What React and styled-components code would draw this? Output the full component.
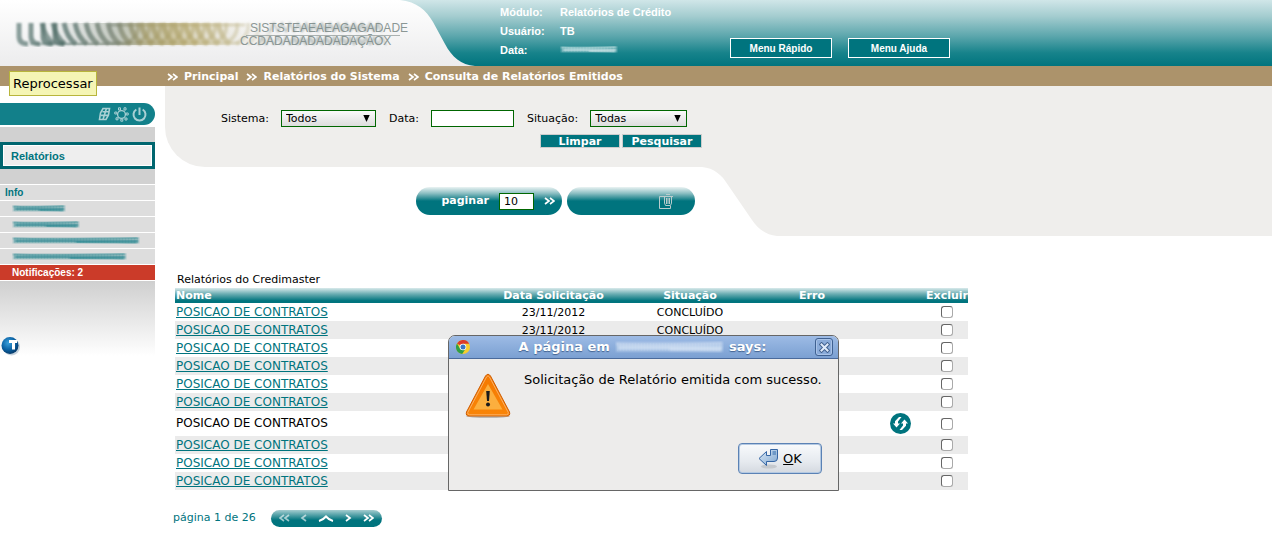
import React, { useState } from "react"
import styled, { createGlobalStyle, css } from "styled-components"

const GlobalStyle = createGlobalStyle`
	* {
		box-sizing: border-box;
	}

	body {
		margin: 0;
		background: #fff;
		color: #000;
		font: 11px/18px "DejaVu Sans", Verdana, sans-serif;
	}

	button, input, select {
		font: inherit;
		margin: 0;
		padding: 0;
		border-radius: 0;
	}

	svg {
		display: block;
		flex: none;
	}
`

const crumbs = ["Principal", "Relatórios do Sistema", "Consulta de Relatórios Emitidos"]

const reports = [
	{ id: 1, date: "23/11/2012", status: "CONCLUÍDO" },
	{ id: 2, date: "23/11/2012", status: "CONCLUÍDO" },
	{ id: 3 },
	{ id: 4 },
	{ id: 5 },
	{ id: 6 },
	{ id: 7, failed: true },
	{ id: 8 },
	{ id: 9 },
	{ id: 10 },
]

const infoItems = [54, 68, 128, 115]

const Chevrons = ({ left, single, faded }) => (
	<svg width={single ? 7 : 11} height="8" viewBox={single ? "0 0 7 8" : "0 0 11 8"}
		fill="none" stroke="#fff" strokeWidth="1.7" opacity={faded ? 0.6 : 1}>
		<g transform={left ? `translate(${single ? 7 : 11} 0) scale(-1 1)` : undefined}>
			<path d="M1 1 L5 4 L1 7" />
			{!single && <path d="M6 1 L10 4 L6 7" />}
		</g>
	</svg>
)

const Smudge = ({ w, h = 9, color = "#26868f", id }) => (
	<svg width={w} height={h} viewBox={`0 0 ${w} 9`} preserveAspectRatio="none" aria-hidden="true">
		<defs>
			<filter id={id} x="-5%" y="-30%" width="110%" height="160%">
				<feGaussianBlur stdDeviation="1 0.6" />
			</filter>
		</defs>
		<g filter={`url(#${id})`} stroke={color} fill="none">
			<path d={`M1 4.5 H${w - 1}`} strokeWidth="6" opacity="0.35" />
			<path d={`M1 2.5 Q${w / 3} 4 ${w - 2} 2`} strokeWidth="2" opacity="0.4" />
			<path d={`M3 5 H${w - 2}`} strokeWidth="2.4" opacity="0.6" />
			<path d={`M${w / 2} 6 Q${w * 0.8} 6 ${w - 3} 6.5`} strokeWidth="2" opacity="0.5" />
		</g>
		<path d={`M2 4.5 H${w - 2}`} stroke={color} strokeWidth="5" strokeDasharray="1 2" opacity="0.1" />
	</svg>
)

const range = (n) => Array.from({ length: n }, (_, i) => i)

const Brand = () => (
	<svg width="475" height="66" viewBox="0 0 475 66" aria-hidden="true">
		<defs>
			<linearGradient id="plate" x1="0" y1="0" x2="0" y2="1">
				<stop offset="0" stopColor="#fff" />
				<stop offset="1" stopColor="#ececed" />
			</linearGradient>
			<linearGradient id="ink" gradientUnits="userSpaceOnUse" x1="16" y1="0" x2="275" y2="0">
				<stop offset="0" stopColor="#6f8884" />
				<stop offset="0.2" stopColor="#4c6963" />
				<stop offset="0.38" stopColor="#768070" />
				<stop offset="0.5" stopColor="#a39a68" />
				<stop offset="0.68" stopColor="#b7aa72" />
				<stop offset="0.85" stopColor="#c9c19c" />
				<stop offset="1" stopColor="#e2e1dc" />
			</linearGradient>
			<linearGradient id="band" gradientUnits="userSpaceOnUse" x1="40" y1="0" x2="260" y2="0">
				<stop offset="0" stopColor="#8fa09b" stopOpacity="0" />
				<stop offset="0.35" stopColor="#8f9a86" stopOpacity="0.5" />
				<stop offset="0.6" stopColor="#b7aa72" stopOpacity="0.65" />
				<stop offset="1" stopColor="#dcd8c6" stopOpacity="0" />
			</linearGradient>
			<filter id="soft"><feGaussianBlur stdDeviation="0.8" /></filter>
		</defs>
		<path fill="url(#plate)"
			d="M0 0 H400 C417 2 426 10 433 22 L445 44 C452 57 461 65 475 66 H0 Z" />
		<path fill="url(#band)" d="M40 23 H260 V45 H40 Z" />
		<g filter="url(#soft)" stroke="url(#ink)" fill="none">
			{range(4).map(i => (
				<path key={i} strokeWidth="5" opacity="0.8"
					d={`M${19 + i * 12} 23 V36 Q${19 + i * 12} 44 ${28 + i * 12} 44`} />
			))}
			{range(17).map(i => (
				<path key={i} strokeWidth="5" opacity="0.7"
					d={`M${42 + i * 11} 23 Q${45 + i * 11} 38 ${54 + i * 11} 44`} />
			))}
			{range(13).map(i => (
				<path key={i} strokeWidth="4" opacity="0.5"
					d={`M${126 + i * 11} 44 Q${140 + i * 11} 36 ${138 + i * 11} 23`} />
			))}
			<path d="M30 43.9 L130 44" strokeWidth="2" opacity="0.6" />
			<path d="M110 25 L245 24.9 M110 43 L240 42.9" strokeWidth="3" opacity="0.55" />
		</g>
		<g fill="#8b9795" fontFamily="Liberation Sans, Arial, sans-serif" fontSize="12" fontWeight="normal">
			<text x="250" y="32">SISTSTEAEAEAGAGADADE</text>
			<text x="240" y="45">CCDADADADADADAÇÃOX</text>
		</g>
		<g filter="url(#soft)" stroke="#7d8c89" fill="none" opacity="0.55">
			{range(14).map(i => (
				<path key={i} strokeWidth="1.5"
					d={`M${270 + i * 8} 32 L${274 + i * 8} 23 L${278 + i * 8} 32`} />
			))}
			{range(16).map(i => (
				<path key={i} strokeWidth="1.5"
					d={`M${258 + i * 8} 45 L${262 + i * 8} 37 L${266 + i * 8} 45`} />
			))}
			<path d="M300 27.5 H380 M290 41 H375" strokeWidth="5" opacity="0.4" />
		</g>
		<path d="M246 35.5 H400" stroke="#8c9795" opacity="0.7" />
	</svg>
)

const SheetIcon = () => (
	<svg width="13" height="14" viewBox="0 0 13 14" fill="none" stroke="#a9d0d4" strokeWidth="1.6">
		<path d="M5 1.5 H11.5 L10.5 8 L8 12.5 H1.5 L2.5 6 Z" />
		<path d="M4.4 4.8 H11 M3 8.4 H10.5 M8.4 1.5 L5 12.5" />
	</svg>
)

const GearIcon = () => (
	<svg width="15" height="15" viewBox="0 0 15 15" fill="none" stroke="#a9d0d4">
		<circle cx="7.5" cy="7.5" r="3.9" strokeWidth="1.3" />
		<path strokeWidth="1"
			d="M4.5 0.8 H6.5 V3 H4.5 Z M10 0.8 H12 V3 H10 Z M12.2 6 H14.2 V8 H12.2 Z M11 11 H13 V13 H11 Z M6.8 12.2 H8.8 V14.2 H6.8 Z M2 10.8 H4 V12.8 H2 Z M0.8 5 H2.8 V7 H0.8 Z" />
	</svg>
)

const PowerIcon = () => (
	<svg width="15" height="15" viewBox="0 0 15 15" fill="none" stroke="#a9d0d4" strokeWidth="2">
		<path d="M4.3 2.5 A6 6 0 1 0 10.7 2.5 M7.5 0.5 V8" />
	</svg>
)

const BallIcon = () => (
	<svg width="20" height="20" viewBox="0 0 20 20">
		<defs>
			<radialGradient id="ball" cx="0.4" cy="0.35" r="0.65">
				<stop offset="0" stopColor="#3aa0dc" />
				<stop offset="0.6" stopColor="#0c64a6" />
				<stop offset="1" stopColor="#053b6c" />
			</radialGradient>
		</defs>
		<circle cx="10.5" cy="11" r="8.5" fill="#9fb4c6" opacity="0.6" />
		<circle cx="9" cy="9.5" r="8.5" fill="url(#ball)" />
		<path d="M8 4 H16 V7 H14 V13.5 H11 V7 H8 Z" fill="#fff" />
	</svg>
)

const TrashIcon = () => (
	<svg width="14" height="16" viewBox="0 0 14 16" fill="none" stroke="#b9cccd">
		<path d="M4 3.5 H0.5 V15.5 H11.5 V13" />
		<path d="M4 3.5 H14 M7 1.5 H11 M5.5 4 V10 L6.5 12.5 H11.5 L12.5 10 V4 M7.5 5 V11 M9 5 V11 M10.5 5 V11" />
	</svg>
)

const RefreshIcon = () => (
	<svg width="21" height="21" viewBox="0 0 21 21">
		<circle cx="10.5" cy="10.5" r="10.5" fill="#00747e" />
		<g fill="#fff">
			<path d="M11.5 4 H9 L5 8.2 V10.5 H3 L6.5 14.5 L10 10.5 H8 V8.5 Z" />
			<path d="M9.5 17 H12 L16 12.8 V10.5 H18 L14.5 6.5 L11 10.5 H13 V12.5 Z" />
		</g>
	</svg>
)

const ChromeIcon = () => (
	<svg width="14" height="14" viewBox="0 0 14 14">
		<circle cx="7" cy="7" r="7" fill="#f7ce2d" />
		<path d="M7 7 L1 3.4 A7 7 0 0 1 13.2 3.7 H7 Z" fill="#dc3b2c" />
		<path d="M1 3.4 A7 7 0 0 0 6.2 14 L9.6 8.8 L4 8.5 Z" fill="#2f9e45" />
		<circle cx="7" cy="7" r="3.3" fill="#fff" />
		<circle cx="7" cy="7" r="2.5" fill="#3a76c4" />
	</svg>
)

const WarningIcon = () => (
	<svg width="46" height="46" viewBox="0 0 46 46">
		<defs>
			<linearGradient id="warn" x1="0" y1="0" x2="0" y2="1">
				<stop offset="0" stopColor="#f57900" />
				<stop offset="1" stopColor="#f98508" />
			</linearGradient>
		</defs>
		<ellipse cx="23" cy="43" rx="22" ry="2" fill="#bbb8b4" />
		<path d="M20.5 3 Q23 -0.5 25.5 3 L44.5 39 Q45.5 43 42 43 H4 Q0.5 43 1.5 39 Z"
			fill="url(#warn)" stroke="#ce5c00" />
		<path d="M21.5 4 Q23 1.5 24.5 4 L43.3 39.5 Q43.5 41.8 41.5 41.8 H4.5 Q2.5 41.8 2.7 39.5 Z"
			fill="none" stroke="#fcb064" />
		<path d="M23 11 L37.5 36.5 H8.5 Z" fill="#fcaf3e" />
		<path d="M21.2 18 H24.8 L24 28 H22 Z" fill="#1a1a1a" />
		<circle cx="23" cy="31.5" r="2" fill="#1a1a1a" />
	</svg>
)

const ReturnIcon = () => (
	<svg width="21" height="21" viewBox="0 0 21 21">
		<defs>
			<linearGradient id="enter" x1="0" y1="0" x2="1" y2="1">
				<stop offset="0" stopColor="#dce9f6" />
				<stop offset="1" stopColor="#7ea6d0" />
			</linearGradient>
		</defs>
		<ellipse cx="11" cy="18.5" rx="8" ry="2" fill="#c5c9ce" />
		<path d="M1 10.5 L8.5 3.5 V7.5 H12.5 V1.5 H19.5 V10 Q19.5 13.5 16 13.5 H8.5 V17.5 Z"
			fill="url(#enter)" stroke="#3465a4" />
		<path d="M14.5 3 H18 V7 H14.5 Z" fill="#6d98c7" />
	</svg>
)

const Select = ({ id, w, options }) => (
	<SelectWrap>
		<SelectBox id={id} w={w}>
			{options.map(item => <option key={item}>{item}</option>)}
		</SelectBox>
		<svg width="7" height="8" viewBox="0 0 7 8"><path d="M0.3 0 H6.7 L3.5 7 Z" /></svg>
	</SelectWrap>
)

const Alert = ({ onClose }) => (
	<Dialog role="alertdialog" aria-labelledby="alert-title" aria-describedby="alert-text">
		<TitleBar>
			<ChromeIcon />
			<DialogTitle id="alert-title">
				A página em <Smudge id="host" w={109} h={14} color="#dbe7f6" /> says:
			</DialogTitle>
			<CloseButton aria-label="Fechar" onClick={onClose}>
				<svg width="11" height="11" viewBox="0 0 11 11" strokeLinecap="square">
					<path d="M2.5 2.5 L8.5 8.5 M8.5 2.5 L2.5 8.5" stroke="#41618f" strokeWidth="4" />
					<path d="M2.5 2.5 L8.5 8.5 M8.5 2.5 L2.5 8.5" stroke="#dfeafa" strokeWidth="2" />
				</svg>
			</CloseButton>
		</TitleBar>
		<DialogBody>
			<WarningIcon />
			<p id="alert-text">Solicitação de Relatório emitida com sucesso.</p>
		</DialogBody>
		<DialogActions>
			<OkButton onClick={onClose}>
				<ReturnIcon />
				<span><u>O</u>K</span>
			</OkButton>
		</DialogActions>
	</Dialog>
)

const App = () => {
	const [alertOpen, setAlertOpen] = useState(true)

	return (
		<>
			<GlobalStyle />
			<Header>
				<Brand />
				<SessionInfo>
					<dt>Módulo:</dt><dd>Relatórios de Crédito</dd>
					<dt>Usuário:</dt><dd>TB</dd>
					<dt>Data:</dt><dd><Smudge id="today" w={58} color="#d5eaec" /></dd>
				</SessionInfo>
				<HeaderMenus>
					<HeaderButton>Menu Rápido</HeaderButton>
					<HeaderButton>Menu Ajuda</HeaderButton>
				</HeaderMenus>
			</Header>
			<Breadcrumb>
				{crumbs.map(item => (
					<Crumb key={item} href="#"><Chevrons />{item}</Crumb>
				))}
			</Breadcrumb>
			<Page>
				<Sidebar>
					<SideTools>
						<IconButton aria-label="Planilha"><SheetIcon /></IconButton>
						<IconButton aria-label="Configurações"><GearIcon /></IconButton>
						<IconButton aria-label="Sair"><PowerIcon /></IconButton>
					</SideTools>
					<SideMenu>
						<ActiveMenu href="#">Relatórios</ActiveMenu>
						<SideRow head>Info</SideRow>
						{infoItems.map((w, i) => (
							<SideRow key={w}><Smudge id={"info" + i} w={w} /></SideRow>
						))}
						<SideRow alert>Notificações: 2</SideRow>
					</SideMenu>
					<SideFoot><BallIcon /></SideFoot>
				</Sidebar>
				<Main>
					<TopArea>
						<TopLeft>
							<Filters onSubmit={e => e.preventDefault()}>
								<Fields>
									<Field>
										<label htmlFor="sistema">Sistema:</label>
										<Select id="sistema" w={95} options={["Todos"]} />
									</Field>
									<Field>
										<label htmlFor="data">Data:</label>
										<TextInput id="data" w={83} />
									</Field>
									<Field>
										<label htmlFor="situacao">Situação:</label>
										<Select id="situacao" w={97} options={["Todas"]} />
									</Field>
								</Fields>
								<FilterButtons>
									<FilterButton type="reset">Limpar</FilterButton>
									<FilterButton>Pesquisar</FilterButton>
								</FilterButtons>
							</Filters>
							<Pills>
								<Pill w={146}>
									<label htmlFor="paginar">paginar</label>
									<TextInput id="paginar" w={35} defaultValue="10" />
									<IconButton aria-label="Aplicar"><Chevrons /></IconButton>
								</Pill>
								<Pill w={128} inset>
									<IconButton aria-label="Excluir selecionados"><TrashIcon /></IconButton>
								</Pill>
							</Pills>
						</TopLeft>
						<svg width="75" height="150" viewBox="0 0 75 150" aria-hidden="true">
							<path fill="#efeeec"
								d="M0 0 H75 V150 C64 149 56 143 50 134 L26 99 C20 89 12 82 0 81 Z" />
						</svg>
						<TopFill />
					</TopArea>
					<Table>
						<caption>Relatórios do Credimaster</caption>
						<colgroup>
							<Col w={302} /><Col w={153} /><Col w={120} />
							<Col w={124} /><Col w={52} /><Col w={42} />
						</colgroup>
						<thead>
							<tr>
								<th>Nome</th>
								<th>Data Solicitação</th>
								<th>Situação</th>
								<th>Erro</th>
								<th />
								<th>Excluir</th>
							</tr>
						</thead>
						<tbody>
							{reports.map(item => (
								<Row key={item.id} tall={item.failed}>
									<td>
										{item.failed ? "POSICAO DE CONTRATOS" :
										<a href="#">POSICAO DE CONTRATOS</a>}
									</td>
									<td>{item.date}</td>
									<td>{item.status}</td>
									<td />
									<td>
										{item.failed &&
										<IconButton aria-label="Reprocessar"><RefreshIcon /></IconButton>}
									</td>
									<td><Check type="checkbox" aria-label={"Excluir " + item.id} /></td>
								</Row>
							))}
						</tbody>
					</Table>
					<Pager>
						<span>página 1 de 26</span>
						<PagerButtons>
							<IconButton aria-label="Primeira"><Chevrons left faded /></IconButton>
							<IconButton aria-label="Anterior"><Chevrons left single faded /></IconButton>
							<IconButton aria-label="Topo">
								<svg width="16" height="7" viewBox="0 0 16 7" fill="none" stroke="#fff" strokeWidth="2">
									<path d="M1 6 Q5 5 8 1.5 Q11 5 15 6" />
								</svg>
							</IconButton>
							<IconButton aria-label="Próxima"><Chevrons single /></IconButton>
							<IconButton aria-label="Última"><Chevrons /></IconButton>
						</PagerButtons>
					</Pager>
				</Main>
			</Page>
			<Tooltip role="tooltip">Reprocessar</Tooltip>
			{alertOpen && <Alert onClose={() => setAlertOpen(false)} />}
		</>
	)
}

const noForward = (...names) => ({ shouldForwardProp: prop => !names.includes(prop) })

const Header = styled.header`
	display: flex;
	height: 66px;
	background: linear-gradient(#d0e6e8, #a3cccf 25%, #5ba6ac 55%, #17838b 80%, #00747e);
	color: #fff;
	font-family: "Liberation Sans", Arial, sans-serif;
	font-weight: bold;
`

const SessionInfo = styled.dl`
	display: grid;
	grid-template-columns: 60px 170px;
	grid-auto-rows: 19px;
	align-items: center;
	margin: 2px 0 0 25px;

	dd {
		margin: 0;
	}
`

const HeaderMenus = styled.div`
	display: flex;
	align-items: flex-end;
	gap: 16px;
	padding-bottom: 8px;
`

const HeaderButton = styled.button`
	width: 102px;
	height: 20px;
	padding-top: 1px;
	border: 1px solid #fff;
	background: #00747e;
	color: #fff;
	font-size: 10px;
	line-height: 18px;
`

const Breadcrumb = styled.nav`
	display: flex;
	gap: 8px;
	height: 20px;
	padding: 1px 0 0 167px;
	background: #ac936b;
`

const Crumb = styled.a`
	display: flex;
	align-items: center;
	gap: 6px;
	color: #fff;
	font-weight: bold;
	text-decoration: none;
`

const Page = styled.div`
	display: flex;
	align-items: flex-start;
	gap: 10px;
`

const Sidebar = styled.aside`
	width: 155px;
	flex: none;
	padding-top: 17px;
	font-family: "Liberation Sans", Arial, sans-serif;
	font-weight: bold;
`

const IconButton = styled.button`
	display: inline-flex;
	border: 0;
	background: none;
	cursor: pointer;
	vertical-align: middle;
`

const SideTools = styled.div`
	display: flex;
	align-items: center;
	justify-content: flex-end;
	gap: 3px;
	height: 22px;
	padding-right: 8px;
	border-radius: 0 11px 11px 0;
	background: #12808a;
`

const SideMenu = styled.div`
	display: flex;
	flex-direction: column;
	margin-top: 2px;
	padding-top: 15px;
	background: #d1d1d1;
`

const ActiveMenu = styled.a`
	height: 27px;
	margin-bottom: 15px;
	padding: 1px 0 0 8px;
	border: 3px solid #00666f;
	box-shadow: inset 0 0 0 1px #fff;
	background: #eee;
	color: #00747e;
	line-height: 21px;
	text-decoration: none;
`

const SideRow = styled.div.withConfig(noForward("head", "alert"))`
	display: flex;
	align-items: center;
	height: 16px;
	padding-left: 12px;
	border-top: 1px solid #fff;
	background: #ddd;
	font-size: 10px;

	${props => props.head && css`
		padding-left: 5px;
		color: #00747e;
	`}

	${props => props.alert && css`
		height: 17px;
		border-bottom: 1px solid #fff;
		background: #cb3b29;
		color: #fff;
	`}
`

const SideFoot = styled.div`
	padding: 55px 0 0 1px;
	background: linear-gradient(#cfcfcf, #fff);
`

const Main = styled.main`
	flex: 1;
	min-width: 0;
`

const TopArea = styled.div`
	display: flex;
`

const TopLeft = styled.div`
	width: 537px;
	flex: none;
`

const TopFill = styled.div`
	flex: 1;
	background: #efeeec;
`

const Filters = styled.form`
	display: flex;
	flex-direction: column;
	gap: 7px;
	height: 81px;
	padding-top: 24px;
	border-bottom-left-radius: 40px;
	background: #efeeec;
`

const Fields = styled.div`
	display: flex;
	gap: 13px;
	padding-left: 56px;
`

const Field = styled.div`
	display: flex;
	align-items: center;
	gap: 12px;
	height: 17px;
`

const inputBox = css`
	width: ${props => props.w}px;
	height: 17px;
	padding-left: 4px;
	border: 1px solid #060;
	background: #fff;
	line-height: 15px;
`

const TextInput = styled.input.withConfig(noForward("w"))`
	${inputBox}
`

const SelectWrap = styled.div`
	display: grid;
	align-items: center;

	> * {
		grid-area: 1 / 1;
	}

	svg {
		justify-self: end;
		margin-right: 6px;
		pointer-events: none;
	}
`

const SelectBox = styled.select.withConfig(noForward("w"))`
	${inputBox}
	appearance: none;
	background: linear-gradient(#fafafa, #ddd);
	color: #000;
`

const FilterButtons = styled.div`
	display: flex;
	justify-content: flex-end;
	gap: 2px;
`

const FilterButton = styled.button`
	width: 80px;
	height: 14px;
	padding-top: 1px;
	border: 1px solid #ccc;
	background: #00747e;
	color: #fff;
	font-weight: bold;
	line-height: 12px;
`

const Pills = styled.div`
	display: flex;
	justify-content: flex-end;
	gap: 5px;
	padding: 20px 7px 0 0;
`

const Pill = styled.div.withConfig(noForward("w", "inset"))`
	display: flex;
	align-items: center;
	justify-content: flex-end;
	gap: ${props => props.inset ? 0 : 10}px;
	width: ${props => props.w}px;
	height: 28px;
	padding-right: ${props => props.inset ? 22 : 7}px;
	border-radius: 14px;
	background: linear-gradient(#eaf3f3, #8fc0c4 22%, #00747e 50%);
	color: #fff;
	font-weight: bold;

	input {
		font-weight: normal;
	}
`

const Table = styled.table`
	width: 793px;
	max-width: 100%;
	margin: 34px 0 0 10px;
	border-collapse: collapse;
	table-layout: fixed;

	caption {
		padding: 1px 0 0 2px;
		line-height: 17px;
		text-align: left;
	}

	thead tr {
		height: 15px;
		background: linear-gradient(#d9eaeb, #6badb2 40%, #00747e 85%);
		color: #fff;
		line-height: 14px;
	}

	th, td {
		padding: 0;
		text-align: center;
		white-space: nowrap;
	}

	th {
		padding-top: 1px;
	}

	th:first-child, td:first-child {
		padding-left: 1px;
		text-align: left;
	}

	td:first-child {
		font-size: 12px;
	}
`

const Col = styled.col.withConfig(noForward("w"))`
	width: ${props => props.w}px;
`

const Row = styled.tr.withConfig(noForward("tall"))`
	height: ${props => props.tall ? 25 : 18}px;
	line-height: 17px;

	&:nth-child(even) {
		background: #ebebeb;
	}

	a {
		color: #00747e;
	}
`

const Check = styled.input`
	display: block;
	appearance: none;
	width: 12px;
	height: 12px;
	margin: 0 auto;
	border: 1px solid #666;
	border-right-color: #aaa;
	border-bottom-color: #aaa;
	border-radius: 3px;
	background: #fff;

	&:checked {
		background: #00747e;
	}
`

const Pager = styled.div`
	display: flex;
	align-items: center;
	gap: 15px;
	margin: 19px 0 0 8px;
	color: #00747e;
`

const PagerButtons = styled.div`
	display: flex;
	align-items: center;
	justify-content: space-between;
	width: 111px;
	height: 17px;
	padding: 0 8px;
	border-radius: 9px;
	background: linear-gradient(#a5cdd0, #00747e 60%);
`

const Tooltip = styled.div`
	position: absolute;
	left: 9px;
	top: 71px;
	padding: 0 3px;
	border: 1px solid #b8b53c;
	background: #f5f5b5;
	font-size: 13px;
	line-height: 23px;
`

const Dialog = styled.section`
	position: absolute;
	left: 448px;
	top: 335px;
	width: 391px;
	height: 156px;
	border: 1px solid #666;
	border-radius: 7px 7px 0 0;
	background: #edeceb;
	font-size: 13px;
	overflow: hidden;
`

const TitleBar = styled.header`
	display: flex;
	align-items: center;
	height: 23px;
	padding: 0 5px 0 7px;
	border-bottom: 1px solid #4a6a9b;
	background: linear-gradient(#9dbbe5, #7ba0d2);
`

const DialogTitle = styled.h2`
	display: flex;
	flex: 1;
	align-items: center;
	justify-content: center;
	gap: 5px;
	margin: 0;
	color: #fff;
	font-size: 13px;
	text-shadow: 0 1px 1px #41618f;
`

const CloseButton = styled.button`
	display: flex;
	align-items: center;
	justify-content: center;
	width: 18px;
	height: 18px;
	border: 1px solid #3f6191;
	border-radius: 3px;
	background: #8aabd9;
	box-shadow: inset 0 0 0 1px #a9c3e8;
`

const DialogBody = styled.div`
	display: flex;
	gap: 13px;
	padding: 14px 15px 0 16px;

	p {
		margin: 0;
		line-height: 13px;
		white-space: nowrap;
	}
`

const DialogActions = styled.div`
	display: flex;
	justify-content: flex-end;
	padding: 24px 16px 0;
`

const OkButton = styled.button`
	display: flex;
	align-items: center;
	justify-content: center;
	gap: 4px;
	width: 84px;
	height: 31px;
	border: 1px solid #5b82b5;
	border-radius: 4px;
	box-shadow: inset 0 0 0 1px #b4c9e2;
	background: linear-gradient(#f8fafc, #e6eaef 60%, #d4d9e0);
	color: #000;
`

export default App
